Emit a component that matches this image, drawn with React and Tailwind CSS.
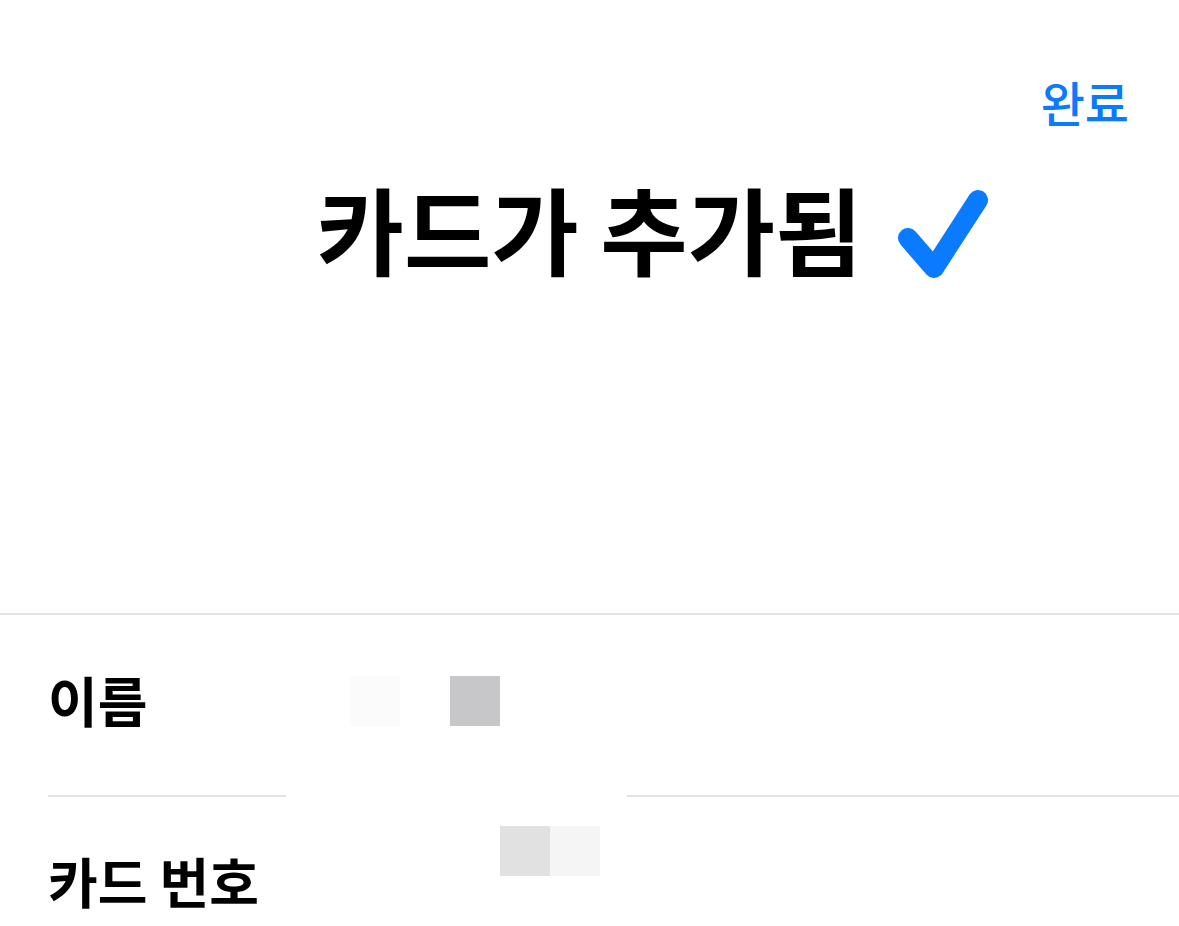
import React from 'react';

const Placeholder = ({ color }) => <div className={`w-[50px] h-[50px] ${color}`} />;

export default function App() {
  return (
    <div className="w-[1179px] h-[926px] overflow-hidden bg-white text-black font-['Noto_Sans_CJK_KR',sans-serif]">
      <div className="flex justify-end pr-[50px] pt-[68px]">
        <button className="text-[48px] leading-[1.4] font-medium text-[#0a7aff]">완료</button>
      </div>

      <div className="flex items-start justify-center pt-[45px]">
        {/* spacer balances the check so the title itself sits centred */}
        <div className="w-[126px] shrink-0" />
        <h1 className="text-[95px] leading-none font-bold">카드가 추가됨</h1>
        <svg
          width="90"
          height="90"
          viewBox="0 0 90 90"
          fill="none"
          className="ml-[36px] mt-[10px] shrink-0 overflow-visible"
        >
          <path
            d="M10 48 L36 78 L80 10"
            stroke="#0a7aff"
            strokeWidth="20"
            strokeLinecap="round"
            strokeLinejoin="round"
          />
        </svg>
      </div>

      <div className="mt-[333px] h-[2px] bg-[#e2e2e2]" />

      <div className="flex items-start h-[180px] pl-[48px]">
        <span className="w-[302px] mt-[58px] text-[54px] font-semibold leading-none">이름</span>
        <div className="flex gap-[50px] mt-[61px]">
          <Placeholder color="bg-[#fbfbfb]" />
          <Placeholder color="bg-[#c7c7c9]" />
        </div>
      </div>

      <div className="flex pl-[48px]">
        <div className="w-[238px] h-[2px] bg-[#e2e2e2]" />
        <div className="w-[341px]" />
        <div className="flex-1 h-[2px] bg-[#e2e2e2]" />
      </div>

      <div className="flex items-start pl-[48px]">
        <span className="w-[452px] mt-[57px] text-[54px] font-semibold leading-none">카드 번호</span>
        <div className="flex mt-[29px]">
          <Placeholder color="bg-[#e1e1e1]" />
          <Placeholder color="bg-[#f5f5f5]" />
        </div>
      </div>
    </div>
  );
}
